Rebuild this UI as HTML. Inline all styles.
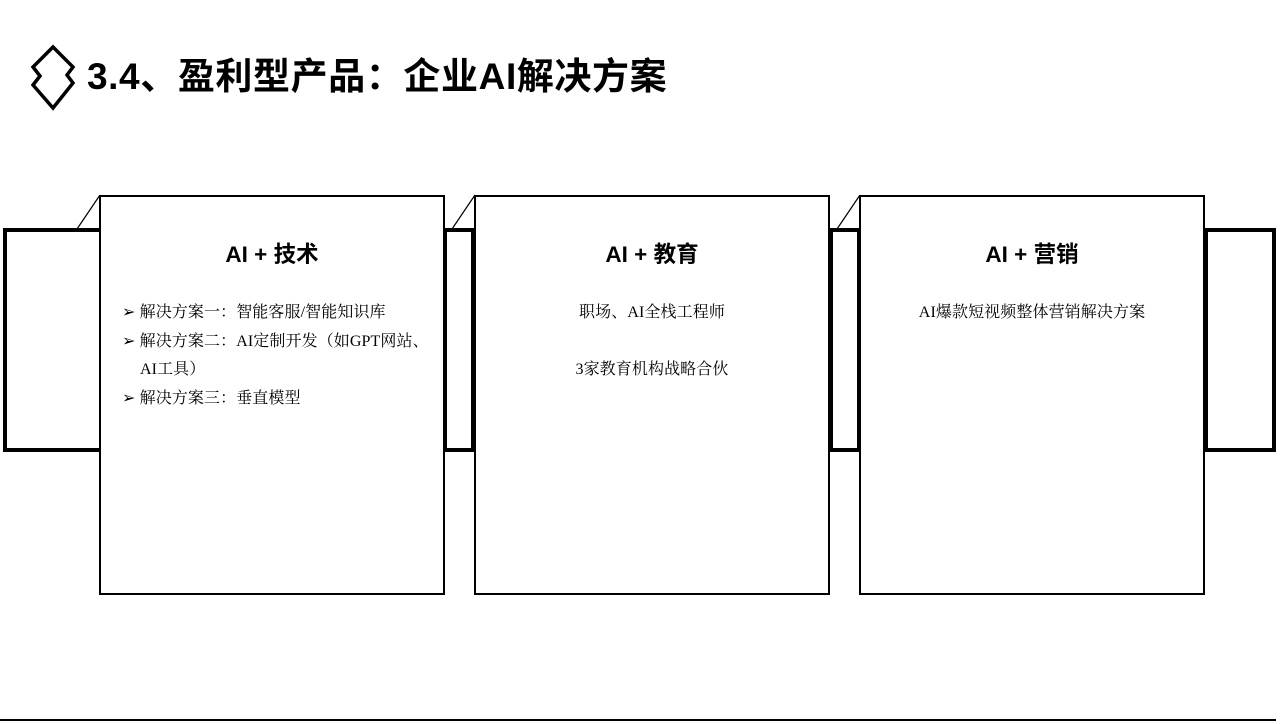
<!DOCTYPE html>
<html><head><meta charset="utf-8"><style>
body{margin:0;width:1280px;height:724px;background:#fff;position:relative;overflow:hidden;font-family:"Liberation Sans","Noto Sans CJK SC",sans-serif;}
.t{position:absolute;left:87px;top:55px;font-size:37px;font-weight:bold;line-height:44px;color:#000;white-space:nowrap;letter-spacing:0.6px}
.back{position:absolute;top:228px;height:216px;border:4px solid #000;background:#fff}
.card{position:absolute;top:195px;height:396px;border:2px solid #000;background:#fff}
.h{position:absolute;top:241px;font-size:22.5px;font-weight:bold;text-align:center;line-height:28px}
.b{position:absolute;font-family:"Liberation Serif","Noto Serif CJK SC",serif;font-size:16px;line-height:28.5px;color:#000;letter-spacing:0.1px;white-space:nowrap}
.c{text-align:center}
</style></head><body>
<svg style="position:absolute;left:0;top:0" width="1280" height="724">
<polygon points="53,47 73,67 67,75 73,83 53,108 33,85 40,76 33,67" fill="none" stroke="#000" stroke-width="3.5" stroke-linejoin="miter"/>
<line x1="77" y1="229" x2="100" y2="195" stroke="#000" stroke-width="1.2"/>
<line x1="452" y1="229" x2="475" y2="195" stroke="#000" stroke-width="1.2"/>
<line x1="837" y1="229" x2="860" y2="195" stroke="#000" stroke-width="1.2"/>
<line x1="0" y1="720" x2="1276" y2="720" stroke="#000" stroke-width="2"/>
</svg>
<div class="t">3.4、盈利型产品：企业AI解决方案</div>
<div class="back" style="left:3px;width:100px"></div>
<div class="back" style="left:443px;width:24px"></div>
<div class="back" style="left:829px;width:24px"></div>
<div class="back" style="left:1204px;width:64px"></div>
<div class="card" style="left:99px;width:342px"></div>
<div class="card" style="left:474px;width:352px"></div>
<div class="card" style="left:859px;width:342px"></div>
<div class="h" style="left:99px;width:346px">AI + 技术</div>
<div class="h" style="left:474px;width:356px">AI + 教育</div>
<div class="h" style="left:859px;width:346px">AI + 营销</div>
<div class="b" style="left:122px;top:299px;width:310px">
➢ 解决方案一：智能客服/智能知识库<br>➢ 解决方案二：AI定制开发（如GPT网站、<br><span style="padding-left:18px">AI工具）</span><br>➢ 解决方案三：垂直模型</div>
<div class="b c" style="left:474px;top:299px;width:356px">职场、AI全栈工程师<br><br>3家教育机构战略合伙</div>
<div class="b c" style="left:859px;top:299px;width:346px">AI爆款短视频整体营销解决方案</div>
</body></html>
